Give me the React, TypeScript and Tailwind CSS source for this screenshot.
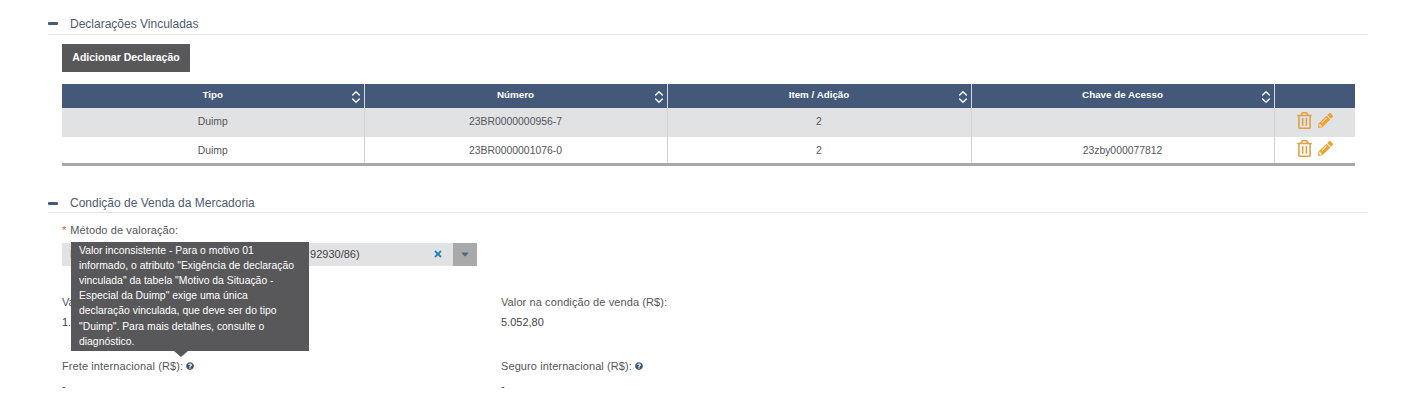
import React from 'react';
import { ChevronsUpDown } from 'lucide-react';
import { FaRegTrashAlt, FaPencilAlt, FaQuestionCircle, FaTimes, FaCaretDown } from 'react-icons/fa';

const columns = ['Tipo', 'Número', 'Item / Adição', 'Chave de Acesso'];

const rows = [
  { tipo: 'Duimp', numero: '23BR0000000956-7', item: '2', chave: '', bg: 'bg-[#e1e2e4]', height: 'h-[29px]', cell: 'pb-[1px]', actions: 'pb-[4px]' },
  { tipo: 'Duimp', numero: '23BR0000001076-0', item: '2', chave: '23zby000077812', bg: 'bg-white', height: 'h-[27px]', cell: 'pt-[2px]', actions: 'pb-[3px]' },
];

const SectionTitle = ({ title, className = 'pt-[2px]' }: { title: string; className?: string }) => (
  <div className={`box-border flex h-[24px] items-center border-b border-[#e6e7e8] ${className}`}>
    <span className="h-[3px] w-[10px] rounded-[1px] bg-[#44597a]" />
    <span className="ml-[12px] text-[12px] text-[#4d5b6e]">{title}</span>
  </div>
);

const Field = ({ label, value, help }: { label: string; value: string; help?: boolean }) => (
  <div className="text-[11px] text-[#444]">
    <div className="flex h-[16px] items-center gap-[3px] text-[#53565a]">
      <span className="tracking-[0.1px]">{label}</span>
      {help && <FaQuestionCircle className="mb-[2px] h-[8px] w-[8px] text-[#3f556f]" />}
    </div>
    <div className="mt-[3px] h-[16px] leading-[16px]">{value}</div>
  </div>
);

export default function App() {
  return (
    <div className="h-[417px] w-[1420px] overflow-hidden bg-white pl-[48px] pr-[52px] pt-[11px] font-['Liberation_Sans',Arial,sans-serif]">
      <SectionTitle title="Declarações Vinculadas" />

      <div className="pl-[14px] pr-[13px]">
        <button className="mt-[9px] block h-[28px] w-[128px] bg-[#58585a] text-center text-[10.5px] font-bold text-white">
          Adicionar Declaração
        </button>

        <table className="mt-[12px] w-[1293px] table-fixed border-collapse border-b-[3px] border-[#a8a8a8] text-[10.4px]">
          <colgroup>
            <col className="w-[302px]" />
            <col className="w-[303px]" />
            <col className="w-[304px]" />
            <col className="w-[303px]" />
            <col className="w-[81px]" />
          </colgroup>
          <thead>
            <tr className="h-[24px] bg-[#44597a] text-white">
              {columns.map((name) => (
                <th key={name} className="relative border-r border-[#d5d8dc] pb-[2px] text-center text-[9.8px] font-bold">
                  {name}
                  <ChevronsUpDown className="absolute right-0 top-[5px] h-[16px] w-[16px]" strokeWidth={2} />
                </th>
              ))}
              <th />
            </tr>
          </thead>
          <tbody>
            {rows.map((row) => (
              <tr key={row.numero} className={`${row.bg} ${row.height} text-[#53565a]`}>
                <td className={`border-r border-[#d2d3d5] text-center ${row.cell}`}>{row.tipo}</td>
                <td className={`border-r border-[#d2d3d5] text-center ${row.cell}`}>{row.numero}</td>
                <td className={`border-r border-[#d2d3d5] text-center ${row.cell}`}>{row.item}</td>
                <td className={`border-r border-[#d2d3d5] text-center ${row.cell}`}>{row.chave}</td>
                <td>
                  <div className={`flex items-center justify-start gap-[6px] pl-[22px] ${row.actions}`}>
                    <FaRegTrashAlt className="h-[17px] w-[15px] text-[#e0a04a]" />
                    <FaPencilAlt className="h-[15px] w-[15px] text-[#eda32f]" />
                  </div>
                </td>
              </tr>
            ))}
          </tbody>
        </table>
      </div>

      <div className="mt-[23px]">
        <SectionTitle title="Condição de Venda da Mercadoria" className="pt-[6px]" />
      </div>

      <div className="pl-[14px]">
        <div className="mt-[11px] flex h-[14px] items-center text-[11px] text-[#53565a]">
          <span className="mr-[4px] text-[#d9534f]">*</span>
          <span className="tracking-[0.1px]">Método de valoração:</span>
        </div>

        <div className="relative mt-[5px] w-[415px]">
          <div className="flex h-[23px] items-center bg-[#e1e2e4] text-[11px] text-[#444]">
            <span className="flex-1 pl-[8px]">Método 1 - Valor de transação ajustado (Decreto 92930/86)</span>
            <FaTimes className="mr-[10px] h-[10px] w-[10px] text-[#1f7fb0]" />
            <span className="flex h-full w-[24px] items-center justify-center bg-[#a8a9ab]">
              <FaCaretDown className="h-[12px] w-[12px] text-[#58687c]" />
            </span>
          </div>

          {/* tooltip over the fields */}
          <div className="absolute left-[9px] top-[-1px] z-10 box-border h-[109px] w-[238px] bg-[#58585a] pl-[8px] pr-[12px] pt-[1px] text-[10.4px] leading-[15.2px] text-white">
            Valor inconsistente - Para o motivo 01 informado, o atributo "Exigência de declaração vinculada" da tabela "Motivo da Situação - Especial da Duimp" exige uma única declaração vinculada, que deve ser do tipo "Duimp". Para mais detalhes, consulte o diagnóstico.
            <span className="absolute left-[103px] top-full h-0 w-0 border-x-[7px] border-t-[6px] border-x-transparent border-t-[#58585a]" />
          </div>
        </div>

        <div className="mt-[29px] grid w-[800px] grid-cols-[439px_1fr] gap-y-[29px]">
          <Field label="Valor na condição de venda (US$):" value="1.000,00" />
          <Field label="Valor na condição de venda (R$):" value="5.052,80" />
          <Field label="Frete internacional (R$):" value="-" help />
          <Field label="Seguro internacional (R$):" value="-" help />
        </div>
      </div>
    </div>
  );
}
